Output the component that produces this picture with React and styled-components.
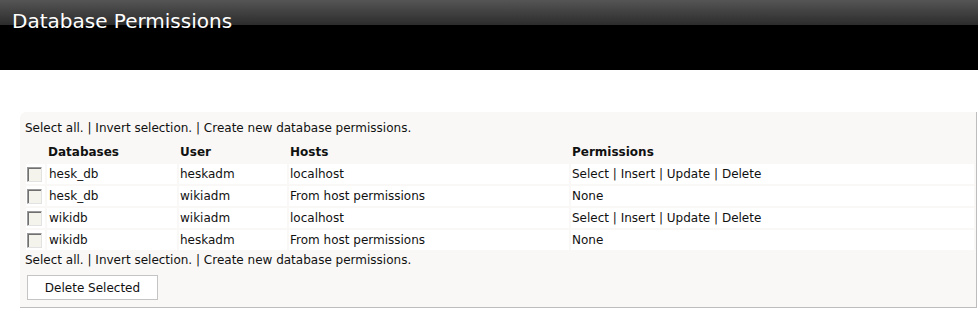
import React from 'react';
import styled, { createGlobalStyle } from 'styled-components';

const GlobalStyle = createGlobalStyle`
  body {
    margin: 0;
    background: #fff;
    font-family: "DejaVu Sans", Verdana, sans-serif;
  }
`;

const Header = styled.div`
  height: 70px;
  background: linear-gradient(to bottom, #555 0px, #2c2c2c 25px, #000 25px, #000 70px);
`;

const Title = styled.h1`
  margin: 0;
  padding: 9px 0 0 12px;
  font-size: 20px;
  font-weight: normal;
  line-height: 24px;
  color: #fff;
`;

const Panel = styled.div`
  margin: 42px 1px 0 20px;
  padding: 8px 0 7px 4px;
  background: #f9f8f6;
  border-right: 1px solid #bdbdbd;
  border-bottom: 1px solid #bdbdbd;
  border-top-left-radius: 6px;
  font-size: 12px;
  color: #111;
`;

const Links = styled.div`
  line-height: 16px;
  padding-left: 1px;
`;

const Table = styled.table`
  width: 100%;
  border-spacing: 2px;
  margin-top: 4px;
  font-size: 12px;
  color: #111;
`;

const Th = styled.th`
  text-align: left;
  font-weight: bold;
  height: 20px;
  padding: 0 1px;
  width: ${p => p.$w ? `${p.$w}px` : 'auto'};
`;

const Td = styled.td`
  background: #fff;
  height: 20px;
  padding: 0 ${p => p.$pad ?? 1}px;
  vertical-align: middle;
`;

const Box = styled.span`
  display: block;
  margin-left: 1px;
  width: 13px;
  height: 13px;
  border: 1px solid;
  border-color: #9a9a9a #e2e2e2 #e2e2e2 #9a9a9a;
  box-shadow: inset 1px 1px 0 #707070;
  background: #f4f4ec;
`;

const Button = styled.button`
  display: block;
  margin: 7px 0 0 3px;
  width: 131px;
  height: 25px;
  background: #fff;
  border: 1px solid #c4c4c4;
  font-family: inherit;
  font-size: 12px;
  color: #111;
`;

const rows = [
  ['hesk_db', 'heskadm', 'localhost', 'Select | Insert | Update | Delete'],
  ['hesk_db', 'wikiadm', 'From host permissions', 'None'],
  ['wikidb', 'wikiadm', 'localhost', 'Select | Insert | Update | Delete'],
  ['wikidb', 'heskadm', 'From host permissions', 'None'],
];

const LinkBar = () => (
  <Links>Select all. | Invert selection. | Create new database permissions.</Links>
);

export default function App() {
  return (
    <>
      <GlobalStyle />
      <Header>
        <Title>Database Permissions</Title>
      </Header>
      <Panel>
        <LinkBar />
        <Table>
          <thead>
            <tr>
              <Th $w={17}></Th>
              <Th $w={128}>Databases</Th>
              <Th $w={106}>User</Th>
              <Th $w={278}>Hosts</Th>
              <Th>Permissions</Th>
            </tr>
          </thead>
          <tbody>
            {rows.map((r, i) => (
              <tr key={i}>
                <Td $pad={0}><Box /></Td>
                <Td $pad={2}>{r[0]}</Td>
                <Td>{r[1]}</Td>
                <Td>{r[2]}</Td>
                <Td>{r[3]}</Td>
              </tr>
            ))}
          </tbody>
        </Table>
        <LinkBar />
        <Button>Delete Selected</Button>
      </Panel>
    </>
  );
}
